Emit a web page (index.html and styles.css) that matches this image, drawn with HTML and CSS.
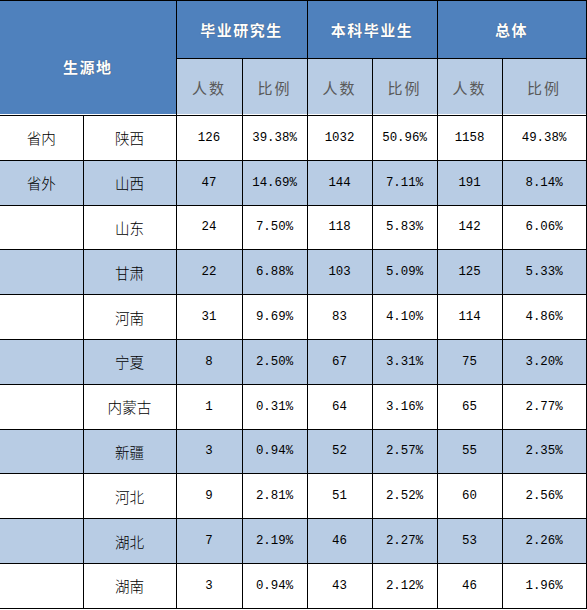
FILE: index.html
```html
<!DOCTYPE html>
<html lang="zh">
<head>
<meta charset="utf-8">
<title>生源地分布</title>
<link rel="stylesheet" href="styles.css">
</head>
<body>
<table class="grid">
  <colgroup>
    <col class="c1"><col class="c2"><col class="c3"><col class="c4"><col class="c5"><col class="c6"><col class="c7"><col class="c8">
  </colgroup>
  <thead>
    <tr class="h1">
      <th class="origin" colspan="2" rowspan="2"><span class="origin-text">生源地</span></th>
      <th colspan="2">毕业研究生</th>
      <th colspan="2">本科毕业生</th>
      <th colspan="2">总体</th>
    </tr>
    <tr class="h2">
      <th>人数</th><th>比例</th><th>人数</th><th>比例</th><th>人数</th><th class="last">比例</th>
    </tr>
  </thead>
  <tbody>
    <tr class="odd"><td class="zh first">省内</td><td class="zh">陕西</td><td>126</td><td>39.38%</td><td>1032</td><td>50.96%</td><td>1158</td><td>49.38%</td></tr>
    <tr class="even"><td class="zh first">省外</td><td class="zh">山西</td><td>47</td><td>14.69%</td><td>144</td><td>7.11%</td><td>191</td><td>8.14%</td></tr>
    <tr class="odd"><td class="zh first"></td><td class="zh">山东</td><td>24</td><td>7.50%</td><td>118</td><td>5.83%</td><td>142</td><td>6.06%</td></tr>
    <tr class="even"><td class="zh first"></td><td class="zh">甘肃</td><td>22</td><td>6.88%</td><td>103</td><td>5.09%</td><td>125</td><td>5.33%</td></tr>
    <tr class="odd"><td class="zh first"></td><td class="zh">河南</td><td>31</td><td>9.69%</td><td>83</td><td>4.10%</td><td>114</td><td>4.86%</td></tr>
    <tr class="even"><td class="zh first"></td><td class="zh">宁夏</td><td>8</td><td>2.50%</td><td>67</td><td>3.31%</td><td>75</td><td>3.20%</td></tr>
    <tr class="odd"><td class="zh first"></td><td class="zh">内蒙古</td><td>1</td><td>0.31%</td><td>64</td><td>3.16%</td><td>65</td><td>2.77%</td></tr>
    <tr class="even"><td class="zh first"></td><td class="zh">新疆</td><td>3</td><td>0.94%</td><td>52</td><td>2.57%</td><td>55</td><td>2.35%</td></tr>
    <tr class="odd"><td class="zh first"></td><td class="zh">河北</td><td>9</td><td>2.81%</td><td>51</td><td>2.52%</td><td>60</td><td>2.56%</td></tr>
    <tr class="even"><td class="zh first"></td><td class="zh">湖北</td><td>7</td><td>2.19%</td><td>46</td><td>2.27%</td><td>53</td><td>2.26%</td></tr>
    <tr class="odd"><td class="zh first"></td><td class="zh">湖南</td><td>3</td><td>0.94%</td><td>43</td><td>2.12%</td><td>46</td><td>1.96%</td></tr>
  </tbody>
</table>
</body>
</html>
```

FILE: styles.css
```css
html, body {
  margin: 0;
  padding: 0;
  background: #ffffff;
}

.grid {
  border-collapse: collapse;
  table-layout: fixed;
  width: 586px;
  font-family: "Liberation Mono", "DejaVu Sans Mono", monospace;
  font-size: 12.4px;
  color: #000;
}

.c1 { width: 83px; }
.c2 { width: 93px; }
.c3 { width: 66px; }
.c4 { width: 65px; }
.c5 { width: 65px; }
.c6 { width: 65px; }
.c7 { width: 65px; }
.c8 { width: 84px; }

.grid th,
.grid td {
  border: 1px solid #000;
  text-align: center;
  vertical-align: middle;
  padding: 0;
}

.grid th:first-child,
.grid td.first {
  border-left: none;
}

.h1 th {
  background: #4f81bd;
  color: #ffffff;
  height: 57px;
  font-family: "Noto Sans CJK SC", sans-serif;
  font-size: 15px;
  font-weight: 700;
  letter-spacing: 1.5px;
  text-shadow: 0 0 1px rgba(60, 60, 60, 0.7);
}

.h1 th.origin {
  box-shadow: inset 0 -1px 0 #ffffff;
}

.origin-text {
  display: inline-block;
  padding-top: 16px;
}

.h2 th {
  background: #b8cce4;
  color: #5a5a5a;
  height: 56px;
  font-family: "Noto Sans CJK SC", sans-serif;
  font-size: 15px;
  font-weight: 400;
  letter-spacing: 2px;
  box-shadow: inset 0 -1px 0 #ffffff;
}

.grid td {
  height: 43.8px;
}

.grid td.zh {
  font-family: "Noto Sans CJK SC", sans-serif;
  font-size: 14.6px;
  font-weight: 300;
}

tr.odd td { background: #ffffff; }
tr.even td { background: #b8cce4; }
```
